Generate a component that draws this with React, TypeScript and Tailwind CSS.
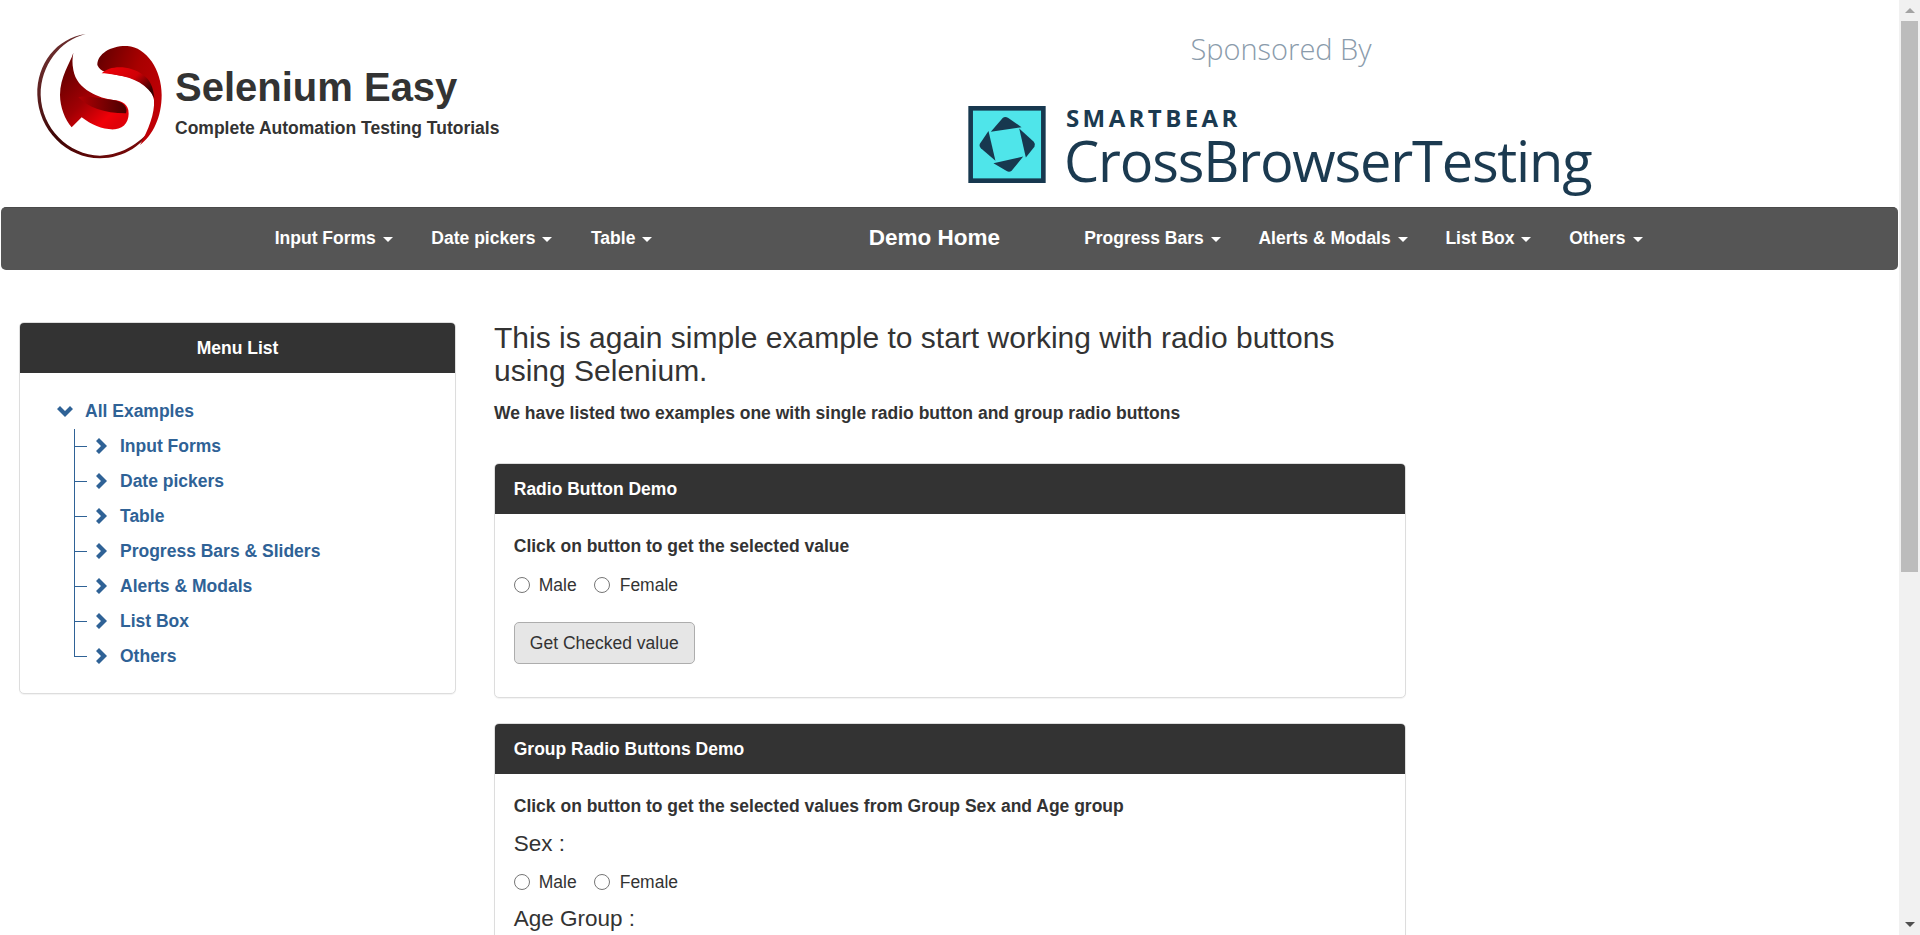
import type { ReactNode } from 'react'

const navLeft = ['Input Forms', 'Date pickers', 'Table']
const navRight = ['Progress Bars', 'Alerts & Modals', 'List Box', 'Others']
const menuItems = ['Input Forms', 'Date pickers', 'Table', 'Progress Bars & Sliders', 'Alerts & Modals', 'List Box', 'Others']

function SeleniumLogo() {
  return (
    <svg viewBox="42 30 390 390" className="w-[130px] h-[130px] shrink-0">
      <defs>
        <linearGradient id="ring" x1="0" y1="0" x2="1" y2="1">
          <stop offset="0" stopColor="#7a3a3a" />
          <stop offset="0.5" stopColor="#3e0505" />
          <stop offset="1" stopColor="#8a0a0a" />
        </linearGradient>
        <linearGradient id="upper" x1="0" y1="0" x2="1" y2="0.6">
          <stop offset="0" stopColor="#5e0000" />
          <stop offset="0.55" stopColor="#a80000" />
          <stop offset="1" stopColor="#c00006" />
        </linearGradient>
        <linearGradient id="inner" x1="0" y1="0" x2="1" y2="0.6">
          <stop offset="0" stopColor="#f00008" />
          <stop offset="0.6" stopColor="#d00006" />
          <stop offset="1" stopColor="#3a0000" />
        </linearGradient>
        <linearGradient id="lower" gradientUnits="userSpaceOnUse" x1="130" y1="170" x2="280" y2="320">
          <stop offset="0" stopColor="#6e0000" />
          <stop offset="0.45" stopColor="#a00004" />
          <stop offset="0.85" stopColor="#f00008" />
          <stop offset="1" stopColor="#e00008" />
        </linearGradient>
        <linearGradient id="fold" x1="0" y1="0" x2="1" y2="0">
          <stop offset="0" stopColor="#b00004" />
          <stop offset="1" stopColor="#4a0000" />
        </linearGradient>
      </defs>
      <path d="M197 42C110 55 50 130 52 225C55 330 140 415 240 415C310 415 375 375 405 310C370 365 310 405 240 407C145 405 65 325 62 225C62 135 120 62 197 42Z" fill="url(#ring)" />
      <path d="M232 135C232 100 275 76 322 78C380 82 425 150 425 225C425 290 400 345 360 375C385 330 405 280 402 240C395 195 340 170 290 165C265 160 240 155 232 135Z" fill="url(#upper)" />
      <path d="M245 160C270 135 330 135 370 165C390 180 400 200 403 235C385 195 340 172 290 165C270 162 255 160 245 160Z" fill="url(#inner)" />
      <path d="M160 98C150 130 120 170 120 225C120 260 135 300 155 322L185 292C215 315 250 330 285 328C315 325 330 300 325 270C320 248 300 242 280 240C240 235 170 210 160 150C156 130 157 115 160 98Z" fill="url(#lower)" />
      <path d="M175 232C205 262 250 280 318 280C325 262 310 245 280 240C240 235 190 225 175 232Z" fill="url(#fold)" />
    </svg>
  )
}

function CbtIcon() {
  return (
    <svg viewBox="24 32 234 233" className="w-[78px] h-[77px] shrink-0">
      <rect x="24" y="32" width="234" height="233" fill="#17384f" />
      <rect x="38" y="46" width="206" height="205" fill="#4fe5ea" />
      <g fill="#17384f">
        <path d="M92 110L128 68Q135 62 145 68L185 96Z" />
        <path d="M178 100L222 140Q228 147 224 155L198 188Z" />
        <path d="M100 205L190 185L155 228Q148 234 140 229Z" />
        <path d="M85 108L106 198L62 160Q55 153 60 145Z" />
      </g>
    </svg>
  )
}

function Caret() {
  return <span className="inline-block ml-[7px] align-middle w-0 h-0 border-x-[5px] border-x-transparent border-t-[5px] border-t-white" />
}

function NavItem({ label, className }: { label: string; className: string }) {
  return (
    <a className={`${className} text-[17.5px] font-bold text-white whitespace-nowrap`}>
      {label}
      <Caret />
    </a>
  )
}

function Panel({ title, center, children, className }: { title: string; center?: boolean; children: ReactNode; className?: string }) {
  return (
    <div className={`border border-[#ddd] rounded-[5px] shadow-[0_1px_1px_rgba(0,0,0,0.05)] bg-white ${className ?? ''}`}>
      <div className={`h-[50px] flex items-center px-[18.75px] bg-[#333] rounded-t-[4px] text-white font-bold text-[17.5px] ${center ? 'justify-center' : ''}`}>
        {title}
      </div>
      {children}
    </div>
  )
}

function RadioPair({ name }: { name: string }) {
  return (
    <div className="flex items-center h-[24px] text-[17.5px] text-[#333]">
      <input type="radio" name={name} className="w-[16px] h-[16px] m-0" />
      <span className="ml-[9px]">Male</span>
      <input type="radio" name={name} className="w-[16px] h-[16px] m-0 ml-[17px]" />
      <span className="ml-[10px]">Female</span>
    </div>
  )
}

function Chevron({ down }: { down?: boolean }) {
  if (down) {
    return (
      <svg viewBox="0 0 16 11" className="w-[16px] h-[11px]">
        <path d="M0 3L3 0L8 5L13 0L16 3L8 11Z" fill="#2f6296" />
      </svg>
    )
  }
  return (
    <svg viewBox="0 0 11 16" className="w-[11px] h-[16px]">
      <path d="M3 0L11 8L3 16L0 13L5 8L0 3Z" fill="#2f6296" />
    </svg>
  )
}

function MenuTree() {
  return (
    <div className="pt-[20.5px] pb-[19.5px] pl-[37px] text-[17.5px] font-bold text-[#2f6296]">
      <div className="flex items-center h-[35px]">
        <Chevron down />
        <span className="ml-[12px]">All Examples</span>
      </div>
      <ul className="relative ml-[17px]">
        <span className="absolute left-0 top-0 bottom-[17px] w-px bg-[#2f6296]" />
        {menuItems.map(item => (
          <li key={item} className="flex items-center h-[35px]">
            <span className="w-[12px] h-px ml-px bg-[#2f6296]" />
            <span className="ml-[9px] flex"><Chevron /></span>
            <span className="ml-[13px]">{item}</span>
          </li>
        ))}
      </ul>
    </div>
  )
}

function Scrollbar() {
  return (
    <aside className="w-[21px] h-[935px] shrink-0 bg-[#f1f1f1] flex flex-col items-center">
      <div className="h-[21px] flex items-center justify-center">
        <span className="w-0 h-0 border-x-[5px] border-x-transparent border-b-[5px] border-b-[#a3a3a3]" />
      </div>
      <div className="w-[17px] h-[551px] bg-[#bcbcbc]" />
      <div className="mt-auto h-[21px] flex items-center justify-center">
        <span className="w-0 h-0 border-x-[5px] border-x-transparent border-t-[5px] border-t-[#505050]" />
      </div>
    </aside>
  )
}

export default function App() {
  return (
    <div className="flex h-[935px] overflow-hidden bg-white font-['Liberation_Sans',Arial,sans-serif] text-[#333]">
      <main className="flex-1 min-w-0">
        <header className="flex h-[207px]">
          <div className="flex w-[960px] pl-[34px] pt-[30px]">
            <div className="h-[130px]"><SeleniumLogo /></div>
            <div className="ml-[11px] pt-[32px]">
              <div className="text-[40px] font-bold leading-[50px]">Selenium Easy</div>
              <div className="text-[17.5px] font-bold leading-[24px] mt-[4px]">Complete Automation Testing Tutorials</div>
            </div>
          </div>
          <div className="w-[640px] flex flex-col items-center">
            <div className="mt-[27px] ml-[2px] h-[44px] leading-[44px] text-[29px] font-light text-[#8a9bab] font-['Open_Sans',sans-serif]">Sponsored By</div>
            <div className="flex self-start ml-[8px] mt-[35px]">
              <CbtIcon />
              <div className="ml-[18px] text-[#1b3a50] font-['Open_Sans',sans-serif]">
                <div className="ml-[2px] text-[24px] font-bold leading-[24px] tracking-[3.4px]">SMARTBEAR</div>
                <div className="text-[56px] leading-[60px] -tracking-[1.2px] whitespace-nowrap">CrossBrowserTesting</div>
              </div>
            </div>
          </div>
        </header>

        <nav className="mx-px h-[63px] pb-[2px] bg-[#555] rounded-[5px] border-t border-[#4a4a4a] flex items-center">
          <div className="flex ml-[254.5px] w-[594.5px]">
            {navLeft.map(item => <NavItem key={item} label={item} className="px-[19.25px]" />)}
          </div>
          <a className="px-[18.75px] text-[22.5px] font-bold text-white whitespace-nowrap">Demo Home</a>
          <div className="flex ml-[46.5px]">
            {navRight.map(item => <NavItem key={item} label={item} className="px-[18.85px]" />)}
          </div>
        </nav>

        <div className="flex pl-[19px] pt-[52px]">
          <div className="w-[437px] shrink-0">
            <Panel title="Menu List" center>
              <MenuTree />
            </Panel>
          </div>
          <div className="w-[912px] ml-[38px] shrink-0">
            <h3 className="w-[880px] text-[30px] leading-[33px] font-normal -mt-[1px]">This is again simple example to start working with radio buttons using Selenium.</h3>
            <p className="mt-[13.5px] text-[17.5px] font-bold leading-[25px]">We have listed two examples one with single radio button and group radio buttons</p>
            <Panel title="Radio Button Demo" className="mt-[37.5px]">
              <div className="pl-[18.75px] pt-[20px] h-[183px]">
                <p className="text-[17.5px] font-bold leading-[25px]">Click on button to get the selected value</p>
                <div className="mt-[14px]"><RadioPair name="single" /></div>
                <button className="mt-[25px] w-[181px] h-[42px] bg-[#e6e6e6] border border-[#adadad] rounded-[5px] text-[17.5px] text-[#333]">Get Checked value</button>
              </div>
            </Panel>
            <Panel title="Group Radio Buttons Demo" className="mt-[25px]">
              <div className="pl-[18.75px] pt-[20px] h-[300px]">
                <p className="text-[17.5px] font-bold leading-[25px]">Click on button to get the selected values from Group Sex and Age group</p>
                <div className="text-[22.5px] leading-[30px] mt-[10px]">Sex :</div>
                <div className="mt-[11px]"><RadioPair name="sex" /></div>
                <div className="text-[22.5px] leading-[30px] mt-[10px]">Age Group :</div>
              </div>
            </Panel>
          </div>
        </div>
      </main>
      <Scrollbar />
    </div>
  )
}
